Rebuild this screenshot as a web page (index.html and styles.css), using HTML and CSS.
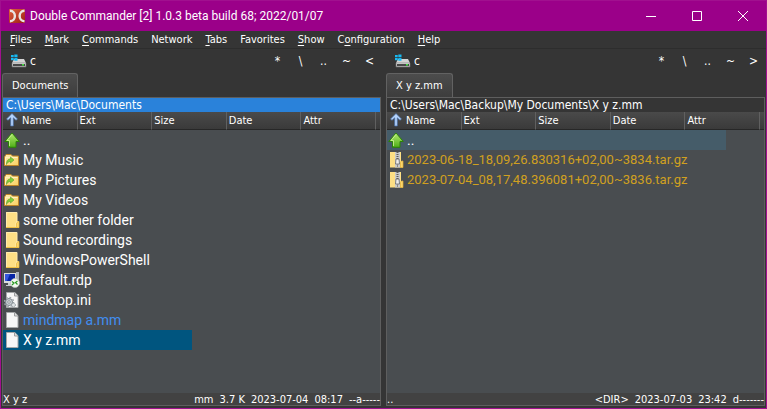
FILE: index.html
```html
<!DOCTYPE html>
<html lang="en">
<head>
<meta charset="utf-8">
<title>Double Commander</title>
<link rel="stylesheet" href="styles.css">
</head>
<body>
<svg class="sprites" aria-hidden="true">
  <defs>
    <linearGradient id="gGreen" x1="0" y1="0" x2="0" y2="1"><stop offset="0" stop-color="#b4ec70"/><stop offset="1" stop-color="#4fae18"/></linearGradient>
    <linearGradient id="gFolder" x1="0" y1="0" x2="1" y2="1"><stop offset="0" stop-color="#ffeeb0"/><stop offset="1" stop-color="#f7cf62"/></linearGradient>
    <linearGradient id="gDisk" x1="0" y1="0" x2="0" y2="1"><stop offset="0" stop-color="#efefef"/><stop offset="1" stop-color="#a9a9a9"/></linearGradient>
    <linearGradient id="gLogo" x1="0" y1="0" x2="1" y2="1"><stop offset="0" stop-color="#e0643c"/><stop offset="1" stop-color="#9c1c14"/></linearGradient>
  </defs>
  <symbol id="up" viewBox="0 0 16 16"><path d="M8 1 15.300 9.500H12v5.800H4.500V9.500H.700z" fill="url(#gGreen)" stroke="#2c8209" stroke-linejoin="round"/><path d="M8 2.500 3 8.500h2.500V14" fill="none" stroke="#d0f59c" stroke-width=".8"/></symbol>
  <symbol id="link" viewBox="0 0 16 16"><path d="M.5 13.500V5L2 2.500h5L8.500 4h6v9.500z" fill="url(#gFolder)" stroke="#bd8426" stroke-linejoin="round"/><path d="M1.500 12.500V5.500h12" fill="none" stroke="#fff0bd"/><path d="M2.500 12.500c0-4 1.500-5.500 4-5.500V5l3.500 3-3.500 3V9.500c-2 0-3 .8-4 3z" fill="#7fce3a" stroke="#5a9f2a" stroke-width=".6"/></symbol>
  <symbol id="folder" viewBox="0 0 16 16"><path d="M2 0h11v9h2v6.500H2z" fill="#fddf85"/><path d="M2.500 15V.5h10.500v8.500l-1 2v4.500" fill="none" stroke="#ffeaab"/><path d="M12.500 15.500v-4l1.500-2h1v6z" fill="#fbd66d" stroke="#e7b83d" stroke-width=".7"/><path d="M2 15.500h13" stroke="#edbe43"/></symbol>
  <symbol id="page" viewBox="0 0 16 16"><path d="M2.500.5h8.300l3.200 3.200v11.800H2.500z" fill="#f7f7f7" stroke="#a5a7a8"/><path d="M10.500.5v3.500H14" fill="#dedede" stroke="#9b9d9e"/></symbol>
  <symbol id="ini" viewBox="0 0 16 16"><use href="#page"/><circle cx="5" cy="10" r="3.500" fill="#c9d0d5" stroke="#7e878d"/><circle cx="5" cy="10" r="4.600" fill="none" stroke="#9aa2a7" stroke-width="1.300" stroke-dasharray="1.800 1.800"/><circle cx="5" cy="10" r="1.300" fill="#f5f5f5" stroke="#7e878d" stroke-width=".8"/><circle cx="9.500" cy="13" r="1.900" fill="#e0e4e6" stroke="#8a9297" stroke-dasharray="1 .6"/></symbol>
  <symbol id="rdp" viewBox="0 0 16 16"><path d="M0 1h12v10H0z" fill="#d9dbdd"/><path d="M1 2h10v7H1z" fill="#0725a7"/><path d="M1 2h5L3 9H1z" fill="#3657dd"/><path d="M12 0h3v9h-3z" fill="#aab0b8"/><path d="M4 11h5v2h2v1H2v-1h2z" fill="#c9ccd0"/><circle cx="11" cy="11" r="4.500" fill="#f4f7f2" stroke="#b6bcb3" stroke-width=".7"/><path d="m8 9.500 2 1.500-2 2M13.500 9l-2 1.500 2 2" fill="none" stroke="#24981e" stroke-width="1.200"/></symbol>
  <symbol id="zip" viewBox="0 0 16 16"><path d="M2 0h11v9h2v6.500H2z" fill="#fddf85"/><path d="M12.500 15.500v-5l1-1.500H15v6.500z" fill="#fbd66d" stroke="#dfaf36" stroke-width=".7"/><path d="M7 0h5v15.500H7z" fill="#c8c9ca"/><path d="M9.500 0v7" stroke="#5d5d5d" stroke-width="2" stroke-dasharray="1 1"/><path d="M8 7h3l.5 5h-4z" fill="#eee" stroke="#666" stroke-width=".8"/><path d="M9.500 12v3" stroke="#8a8a8a"/></symbol>
  <symbol id="sort" viewBox="0 0 14 14"><path d="M7 .5 12.500 6 11 7.300 8.300 4.800V13H5.700V4.800L3 7.300 1.500 6z" fill="#b5d3fb" stroke="#466fab" stroke-width=".7"/></symbol>
  <symbol id="drive" viewBox="0 0 16 14"><path d="M3 5h10l2 4H1z" fill="#d4d4d4"/><path d="M1 9h14v4H1z" fill="url(#gDisk)" stroke="#737373" stroke-width=".6"/><path d="M2 10h12v2H2z" fill="#484848"/><path d="M11 10h2v1.500h-2z" fill="#43e342"/><path d="M0 1h2.700v2.300H0zM3.300.5H6.500v2.800H3.300zM0 4h2.700v2.300H0zM3.300 4h3.200v2.800H3.300z" fill="#18b9f2"/></symbol>
</svg>

<div class="window">
  <header class="titlebar">
    <svg class="logo" viewBox="0 0 16 14" aria-hidden="true"><rect width="16" height="14" rx="1" fill="url(#gLogo)"/><path d="M1 1.800c6.500 0 6.500 10.400 0 10.400M15.500 1.800c-6.500 0-6.500 10.400 0 10.400" fill="none" stroke="#e9e4e2" stroke-width="2.400"/></svg>
    <h1>Double Commander [2] 1.0.3 beta build 68; 2022/01/07</h1>
    <div class="controls">
      <button aria-label="Minimize"><svg viewBox="0 0 10 10"><path d="M0 5.500h10"/></svg></button>
      <button aria-label="Maximize"><svg viewBox="0 0 10 10"><path d="M.5.500h9v9h-9z"/></svg></button>
      <button aria-label="Close"><svg viewBox="0 0 10 10"><path d="m0 0 10 10M10 0 0 10"/></svg></button>
    </div>
  </header>

  <nav class="menu">
    <button><u>F</u>iles</button>
    <button><u>M</u>ark</button>
    <button><u>C</u>ommands</button>
    <button>Network</button>
    <button><u>T</u>abs</button>
    <button>Favorites</button>
    <button><u>S</u>how</button>
    <button>C<u>o</u>nfiguration</button>
    <button><u>H</u>elp</button>
  </nav>

  <main class="panels">
    <section class="panel active">
      <div class="tools">
        <button class="drive"><svg><use href="#drive"/></svg>c</button>
        <button>*</button><button>\</button><button>..</button><button>~</button><button>&lt;</button>
      </div>
      <div class="tabs"><button class="tab">Documents</button></div>
      <div class="view">
        <div class="path">C:\Users\Mac\Documents</div>
        <div class="list">
          <table>
            <colgroup><col class="first"><col><col><col><col><col class="rest"></colgroup>
            <thead><tr><th><svg><use href="#sort"/></svg>Name</th><th>Ext</th><th>Size</th><th>Date</th><th>Attr</th><th></th></tr></thead>
            <tbody>
              <tr><td colspan="6"><div class="file"><svg><use href="#up"/></svg>..</div></td></tr>
              <tr><td colspan="6"><div class="file"><svg><use href="#link"/></svg>My Music</div></td></tr>
              <tr><td colspan="6"><div class="file"><svg><use href="#link"/></svg>My Pictures</div></td></tr>
              <tr><td colspan="6"><div class="file"><svg><use href="#link"/></svg>My Videos</div></td></tr>
              <tr><td colspan="6"><div class="file"><svg><use href="#folder"/></svg>some other folder</div></td></tr>
              <tr><td colspan="6"><div class="file"><svg><use href="#folder"/></svg>Sound recordings</div></td></tr>
              <tr><td colspan="6"><div class="file"><svg><use href="#folder"/></svg>WindowsPowerShell</div></td></tr>
              <tr><td colspan="6"><div class="file"><svg><use href="#rdp"/></svg>Default.rdp</div></td></tr>
              <tr><td colspan="6"><div class="file"><svg><use href="#ini"/></svg>desktop.ini</div></td></tr>
              <tr><td colspan="6"><div class="file mindmap"><svg><use href="#page"/></svg>mindmap a.mm</div></td></tr>
              <tr><td colspan="6"><div class="file cursor"><svg><use href="#page"/></svg>X y z.mm</div></td></tr>
            </tbody>
          </table>
        </div>
        <footer class="status"><span class="name">X y z</span><span>mm</span><span>3.7 K</span><span>2023-07-04</span><span>08:17</span><span>--a-----</span></footer>
      </div>
    </section>

    <section class="panel">
      <div class="tools">
        <button class="drive"><svg><use href="#drive"/></svg>c</button>
        <button>*</button><button>\</button><button>..</button><button>~</button><button>&gt;</button>
      </div>
      <div class="tabs"><button class="tab">X y z.mm</button></div>
      <div class="view">
        <div class="path">C:\Users\Mac\Backup\My Documents\X y z.mm</div>
        <div class="list">
          <table>
            <colgroup><col class="first"><col><col><col><col><col class="rest"></colgroup>
            <thead><tr><th><svg><use href="#sort"/></svg>Name</th><th>Ext</th><th>Size</th><th>Date</th><th>Attr</th><th></th></tr></thead>
            <tbody>
              <tr><td colspan="6"><div class="file idle-cursor"><svg><use href="#up"/></svg>..</div></td></tr>
              <tr><td colspan="6"><div class="file archive"><svg><use href="#zip"/></svg>2023-06-18_18,09,26.830316+02,00~3834.tar.gz</div></td></tr>
              <tr><td colspan="6"><div class="file archive"><svg><use href="#zip"/></svg>2023-07-04_08,17,48.396081+02,00~3836.tar.gz</div></td></tr>
            </tbody>
          </table>
        </div>
        <footer class="status"><span class="name">..</span><span>&lt;DIR&gt;</span><span>2023-07-03</span><span>23:42</span><span>d-------</span></footer>
      </div>
    </section>
  </main>
</div>
</body>
</html>
```
FILE: styles.css
```css
* { box-sizing: border-box; }
body {
  margin: 0;
  background: #353535;
  color: #fff;
  font: 11px/16px "DejaVu Sans Condensed", "Noto Sans", sans-serif;
}
button {
  margin: 0;
  padding: 0;
  border: 0;
  background: none;
  color: inherit;
  font: inherit;
}
.sprites { position: absolute; width: 0; height: 0; }

.window {
  display: flex;
  flex-direction: column;
  min-height: 100vh;
  border: 1px solid #a1108f;
}
.titlebar {
  display: flex;
  align-items: center;
  height: 30px;
  padding-left: 8px;
  background: #9b0089;
}
.logo { width: 16px; height: 14px; margin-right: 5px; }
h1 {
  flex: 1;
  margin: 0;
  font: 12px/16px Roboto, "Noto Sans", sans-serif;
  white-space: nowrap;
}
.controls { display: flex; }
.controls button { width: 46px; height: 28px; }
.controls svg {
  display: block;
  width: 10px;
  height: 10px;
  margin: 0 auto;
  fill: none;
  stroke: #fff;
}

.menu {
  display: flex;
  gap: 13px;
  height: 18px;
  padding: 1px 0 0 9px;
  border-bottom: 1px solid #2d2d2d;
}
.menu u { text-underline-offset: 2px; }

.panels {
  flex: 1;
  display: grid;
  grid-template-columns: 1fr 1fr;
  gap: 5px;
  padding: 0 1px 2px;
}
.panel { display: flex; flex-direction: column; min-width: 0; }
.tools {
  display: flex;
  align-items: center;
  height: 24px;
  font-size: 12px;
}
.tools button { width: 23px; }
.tools .drive {
  display: flex;
  align-items: center;
  gap: 3px;
  width: auto;
  margin-right: auto;
  padding-left: 9px;
}
.drive svg { width: 16px; height: 14px; }
.tabs { display: flex; height: 24px; }
.tab {
  padding: 0 9px;
  border: 1px solid #626262;
  border-bottom: 0;
  border-radius: 3px 3px 0 0;
  background: linear-gradient(#4c4c4c, #3d3d3d);
}
.view {
  flex: 1;
  display: flex;
  flex-direction: column;
  border: 1px solid #5e5e5e;
}
.path {
  height: 14px;
  padding-left: 3px;
  background: #353535;
  font-size: 12px;
  line-height: 14px;
  white-space: nowrap;
}
.active .path { background: #2a82da; }

.list { flex: 1; background: #494d50; }
table { width: 100%; border-collapse: separate; border-spacing: 0; table-layout: fixed; }
.rest { width: 4px; }
th {
  height: 18px;
  padding: 0 0 0 2px;
  border-right: 1px solid #606060;
  border-bottom: 1px solid #272727;
  background: linear-gradient(#4a4a4a, #3a3a3a);
  font-weight: 400;
  line-height: 16px;
  text-align: left;
}
th:last-child { padding: 0; border-right: 0; }
th svg { width: 14px; height: 14px; margin-right: 3px; vertical-align: -3px; }
td { padding: 0; }
.file {
  display: flex;
  align-items: center;
  gap: 3px;
  height: 20px;
  padding-left: 1px;
  font: 14px/20px Roboto, "Noto Sans", sans-serif;
  white-space: nowrap;
}
.file svg { flex: none; width: 16px; height: 16px; }
.mindmap { color: #418df0; }
.archive { color: #d0a020; font-size: 13px; }
.cursor { width: 50%; background: #00557f; }
.idle-cursor { width: 90%; background: #455c69; }

.status {
  display: flex;
  gap: 6px;
  height: 12px;
  background: #424242;
  line-height: 14px;
  white-space: nowrap;
}
.name { flex: 1; }
```
